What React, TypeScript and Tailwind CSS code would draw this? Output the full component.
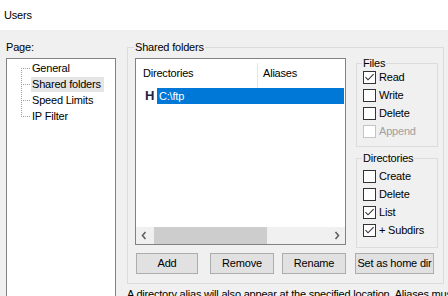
import React from "react";

function Check({ checked, disabled }: { checked?: boolean; disabled?: boolean }) {
  return (
    <span
      className={`w-[13px] h-[13px] shrink-0 border bg-white flex items-center justify-center ${
        disabled ? "border-[#c4c4c4]" : "border-[#333333]"
      }`}
    >
      {checked && (
        <svg width="11" height="11" viewBox="0 0 11 11">
          <path d="M1.5 5.2 L4 7.8 L9.6 2.2" fill="none" stroke="#333333" strokeWidth="1.1" />
        </svg>
      )}
    </span>
  );
}

function CheckRow({ label, checked, disabled }: { label: string; checked?: boolean; disabled?: boolean }) {
  return (
    <div className="h-[14px] flex items-center gap-[3px]">
      <Check checked={checked} disabled={disabled} />
      <span className={disabled ? "text-[#a0a0a0]" : "text-black"}>{label}</span>
    </div>
  );
}

function TreeRow({ label, pos, selected }: { label: string; pos: "first" | "mid" | "last"; selected?: boolean }) {
  return (
    <div className="h-[16px] flex items-center pl-[14px]">
      <svg width="10" height="16" className="shrink-0">
        <line
          x1="0.5"
          y1={pos === "first" ? 8 : 0}
          x2="0.5"
          y2={pos === "last" ? 9 : 16}
          stroke="#a0a0a0"
          strokeDasharray="1 1"
        />
        <line x1="2" y1="8.5" x2="10" y2="8.5" stroke="#a0a0a0" strokeDasharray="1 1" />
      </svg>
      <span className={`pl-[1px] pr-[3px] h-[15px] leading-[15px] ${selected ? "bg-[#e5e5e5]" : ""}`}>{label}</span>
    </div>
  );
}

function Chevron({ dir }: { dir: "left" | "right" }) {
  return (
    <svg width="17" height="17" viewBox="0 0 17 17">
      <path
        d={dir === "left" ? "M9.5 5 L6.5 8.5 L9.5 12" : "M7.5 5 L10.5 8.5 L7.5 12"}
        fill="none"
        stroke="#606060"
        strokeWidth="1.6"
      />
    </svg>
  );
}

function Btn({ children, className }: { children: React.ReactNode; className: string }) {
  return (
    <div
      className={`h-[21px] shrink-0 border border-[#adadad] bg-[#e1e1e1] flex items-center justify-center ${className}`}
    >
      {children}
    </div>
  );
}

export default function App() {
  return (
    <div className="w-[448px] h-[296px] overflow-hidden bg-[#f0f0f0] text-black font-['Liberation_Sans',Arial,sans-serif] text-[11px] tracking-[-0.2px]">
      <div className="h-[30px] bg-white flex items-center pl-[4px]">Users</div>
      <div className="flex">
        {/* page tree */}
        <div className="w-[127px] shrink-0 pl-[6px]">
          <div className="mt-[10px] h-[14px] leading-[14px]">Page:</div>
          <div className="mt-[4px] w-[110px] h-[240px] border border-[#828282] bg-white pt-[1px]">
            <TreeRow label="General" pos="first" />
            <TreeRow label="Shared folders" pos="mid" selected />
            <TreeRow label="Speed Limits" pos="mid" />
            <TreeRow label="IP Filter" pos="last" />
          </div>
        </div>

        {/* shared folders page */}
        <div className="shrink-0">
          <fieldset className="mt-[10px] w-[317px] h-[244px] border border-[#dcdcdc] min-w-0">
            <legend className="ml-[6px] px-[1px] leading-[14px]">Shared folders</legend>
            <div className="flex items-start pl-[7px]">
              <div className="w-[211px] shrink-0 mt-[4px]">
                <div className="h-[187px] border border-[#828282] bg-white flex flex-col">
                  <div className="h-[29px] shrink-0 flex">
                    <div className="w-[121px] pl-[7px] flex items-center">Directories</div>
                    <div className="w-px mt-[4px] bg-[#e5e5e5]" />
                    <div className="pl-[5px] flex items-center">Aliases</div>
                  </div>
                  <div className="h-[16px] shrink-0 flex items-center">
                    <span className="w-[21px] pl-[9px] text-[13px] font-bold text-[#1b2540] leading-[16px]">H</span>
                    <div className="flex-1 mr-[1px] h-[16px] bg-[#0078d7] text-white pl-[2px] flex items-center">
                      C:\ftp
                    </div>
                  </div>
                  <div className="flex-1" />
                  <div className="h-[17px] shrink-0 flex bg-[#f0f0f0]">
                    <Chevron dir="left" />
                    <div className="ml-[1px] w-[113px] bg-[#cdcdcd]" />
                    <div className="flex-1" />
                    <Chevron dir="right" />
                  </div>
                </div>
                <div className="mt-[8px] flex">
                  <Btn className="ml-[1px] w-[62px]">Add</Btn>
                  <Btn className="ml-[12px] w-[64px]">Remove</Btn>
                  <Btn className="ml-[8px] w-[64px]">Rename</Btn>
                </div>
              </div>

              <div className="ml-[10px] w-[82px] shrink-0 mt-[2px] flex flex-col">
                <fieldset className="h-[91px] border border-[#dcdcdc] min-w-0 pl-[6px]">
                  <legend className="ml-[-1px] px-[1px] leading-[14px]">Files</legend>
                  <div className="flex flex-col gap-[4px]">
                    <CheckRow label="Read" checked />
                    <CheckRow label="Write" />
                    <CheckRow label="Delete" />
                    <CheckRow label="Append" disabled />
                  </div>
                </fieldset>
                <fieldset className="mt-[4px] h-[97px] border border-[#dcdcdc] min-w-0 pl-[6px]">
                  <legend className="ml-[-1px] px-[1px] leading-[14px]">Directories</legend>
                  <div className="mt-[4px] flex flex-col gap-[4px]">
                    <CheckRow label="Create" />
                    <CheckRow label="Delete" />
                    <CheckRow label="List" checked />
                    <CheckRow label="+ Subdirs" checked />
                  </div>
                </fieldset>
                <Btn className="mt-[5px] -ml-[1px] w-[79px]">Set as home dir</Btn>
              </div>
            </div>
          </fieldset>
          <div className="mt-[3px] h-[14px] leading-[14px] whitespace-nowrap">
            A directory alias will also appear at the specified location. Aliases must contain the full virtual path.
          </div>
        </div>
      </div>
    </div>
  );
}
